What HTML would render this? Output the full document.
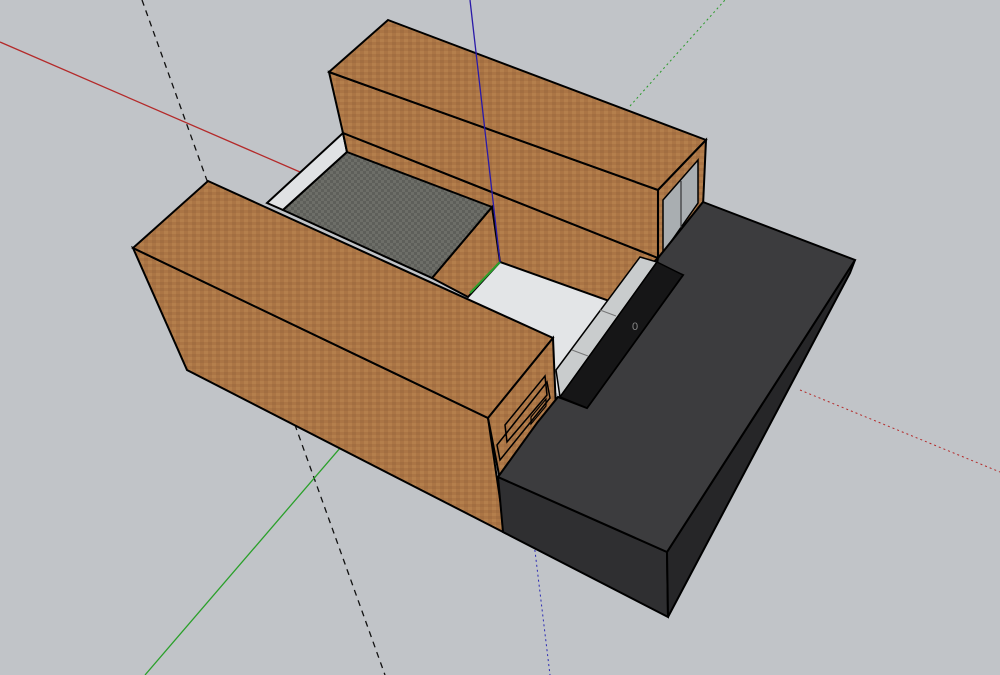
<!DOCTYPE html>
<html><head><meta charset="utf-8"><style>html,body{margin:0;padding:0;background:#c1c4c8;overflow:hidden}svg{display:block}</style></head><body>
<svg width="1000" height="675" viewBox="0 0 1000 675" xmlns="http://www.w3.org/2000/svg">
<defs>
<pattern id="brick" width="8" height="6" patternUnits="userSpaceOnUse">
<rect width="8" height="6" fill="#ab7545"/>
<rect x="0" y="0" width="4" height="3" fill="#9f6b3f" opacity="0.7"/>
<rect x="4" y="3" width="4" height="3" fill="#b8834f" opacity="0.7"/>
</pattern>
<pattern id="tile" width="6" height="6" patternUnits="userSpaceOnUse">
<rect width="6" height="6" fill="#6d6e68"/>
<rect width="3" height="3" fill="#5e5f5a"/>
<rect x="3" y="3" width="3" height="3" fill="#5e5f5a"/>
</pattern>
</defs>
<rect width="1000" height="675" fill="#c1c4c8"/>
<line x1="0" y1="42" x2="300" y2="172" stroke="#b42a2a" stroke-width="1.3"/>
<line x1="800" y1="390" x2="1000" y2="472" stroke="#b42a2a" stroke-width="1" stroke-dasharray="2 3"/>
<line x1="142" y1="0" x2="385" y2="675" stroke="#111" stroke-width="1.3" stroke-dasharray="6 5"/>
<line x1="145" y1="675" x2="500" y2="262" stroke="#2aa02a" stroke-width="1.3"/>
<line x1="630" y1="106" x2="725" y2="0" stroke="#2a9a2a" stroke-width="1" stroke-dasharray="2 3"/>
<line x1="500" y1="262" x2="550" y2="675" stroke="#2a2ab4" stroke-width="1" stroke-dasharray="2 3"/>
<polygon points="468,297 500,262 612,302 560,395 450,330" fill="#e3e5e7"/>
<polygon points="267,203 343,133 347,152 283,210" fill="#e0e2e4" stroke="#000" stroke-width="2"/>
<polygon points="343,133 658,258 612,302 500,262 347,152" fill="url(#brick)" stroke="#000" stroke-width="2"/>
<polygon points="329,72 658,190 658,258 343,133" fill="url(#brick)" stroke="#000" stroke-width="2"/>
<polygon points="388,20 706,140 658,190 329,72" fill="url(#brick)" stroke="#000" stroke-width="2"/>
<polygon points="706,140 658,190 658,258 703,206" fill="url(#brick)" stroke="#000" stroke-width="2"/>
<polygon points="663,200 698,160 698,203 663,253" fill="#a9aeb1" stroke="#000" stroke-width="1.5"/>
<line x1="681" y1="181" x2="681" y2="228" stroke="#333" stroke-width="1.2"/>
<polygon points="492,207 500,262 468,297 432,278" fill="url(#brick)" stroke="#000" stroke-width="2"/>
<line x1="500" y1="262" x2="470" y2="293" stroke="#2aa02a" stroke-width="2"/>
<polygon points="347,152 492,207 432,278 283,210" fill="url(#tile)" stroke="#000" stroke-width="2"/>
<line x1="470" y1="0" x2="500" y2="262" stroke="#2a1aa8" stroke-width="1.3"/>
<polygon points="133,248 488,418 505,533 187,370" fill="url(#brick)" stroke="#000" stroke-width="2"/>
<polygon points="208,181 553,338 488,418 133,248" fill="url(#brick)" stroke="#000" stroke-width="2"/>
<polygon points="553,338 488,418 500,480 556,410" fill="url(#brick)" stroke="#000" stroke-width="2"/>
<polygon points="497,445 547,382 550,398 500,460" fill="none" stroke="#000" stroke-width="1.5"/>
<polygon points="505,425 545,376 547,395 507,442" fill="none" stroke="#000" stroke-width="1.5"/>
<polygon points="531,417 546,399 546,406 531,424" fill="none" stroke="#000" stroke-width="1.2"/>
<polygon points="498,477 667,552 668,617 503,532" fill="#2f2f31" stroke="#000" stroke-width="2"/>
<polygon points="667,552 855,260 850,273 668,617" fill="#262628" stroke="#000" stroke-width="2"/>
<polygon points="703,202 855,260 667,552 498,477 537,423 558,397 587,408 683,275 657,264 658,258" fill="#3c3c3e" stroke="#000" stroke-width="2"/>
<polygon points="640,257 657,262 560,397 556,370" fill="#c9cccd" stroke="#000" stroke-width="1.5"/>
<polygon points="657,262 683,275 587,408 560,397" fill="#161617" stroke="#000" stroke-width="1.5"/>
<line x1="600" y1="310" x2="616" y2="316" stroke="#777" stroke-width="1"/>
<line x1="572" y1="350" x2="588" y2="356" stroke="#777" stroke-width="1"/>
<text x="632" y="330" font-family="Liberation Sans, sans-serif" font-size="11" fill="#888">0</text>
</svg>
</body></html>
